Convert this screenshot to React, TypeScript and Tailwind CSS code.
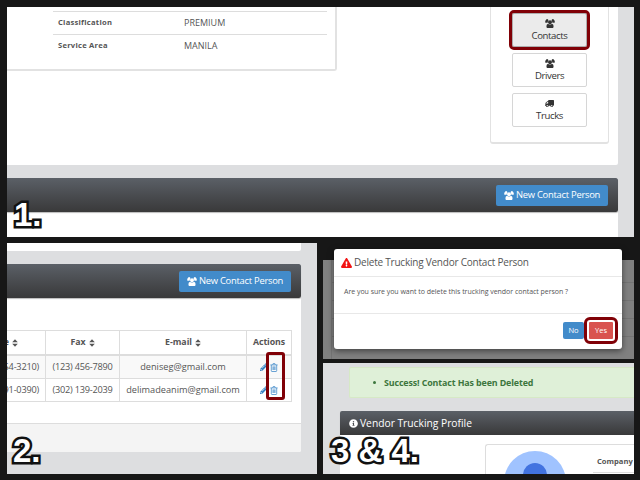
import React from "react";
import { FaTruck, FaInfoCircle, FaExclamationTriangle, FaPencilAlt } from "react-icons/fa";

function UsersIcon({ className }: { className: string }) {
  return (
    <svg viewBox="0 0 1920 1792" fill="currentColor" className={className}>
      <path d="M593 640q-162 5-265 128h-134q-82 0-138-40.500t-56-118.500q0-353 124-353 6 0 43.500 21t97.500 42.500 119 21.500q67 0 133-23-5 37-5 66 0 139 81 256zM1664 1533q0 120-73 189.500t-194 69.500h-874q-121 0-194-69.500t-73-189.500q0-53 3.500-103.500t14-109 26.500-108.500 43-97.500 62-81 85.500-53.500 111.500-20q10 0 43 21.500t73 48 107 48 135 21.500 135-21.500 107-48 73-48 43-21.500q61 0 111.500 20t85.500 53.500 62 81 43 97.500 26.500 108.500 14 109 3.500 103.500zM640 256q0 106-75 181t-181 75-181-75-75-181 75-181 181-75 181 75 75 181zM1344 640q0 159-112.500 271.500t-271.500 112.500-271.500-112.500-112.500-271.500 112.500-271.500 271.500-112.500 271.500 112.500 112.500 271.500zM1920 609q0 78-56 118.500t-138 40.500h-134q-103-123-265-128 81-117 81-256 0-29-5-66 66 23 133 23 59 0 119-21.500t97.500-42.500 43.500-21q124 0 124 353zM1792 256q0 106-75 181t-181 75-181-75-75-181 75-181 181-75 181 75 75 181z" />
    </svg>
  );
}

function SortIcon() {
  return (
    <svg viewBox="0 0 6 8" fill="currentColor" className="h-2 w-[6px]">
      <path d="M3 0.3L5.8 3.3H0.2zM3 7.7L0.2 4.7H5.8z" />
    </svg>
  );
}

function TrashIcon() {
  return (
    <svg viewBox="0 0 8 9" fill="none" stroke="currentColor" strokeWidth="0.8" className="h-[9px] w-2">
      <path d="M0.4 1.9H7.6M2.7 1.8L3.1 0.6H4.9L5.3 1.8M1.3 2V7.7Q1.3 8.5 2 8.5H6Q6.7 8.5 6.7 7.7V2M3 3.4V7M4 3.4V7M5 3.4V7" />
    </svg>
  );
}

function NewContactButton() {
  return (
    <div className="flex h-[21px] w-[112px] items-center justify-center gap-[2px] rounded-[2px] bg-[#428bca] text-[9.4px] leading-none tracking-[-0.25px] text-white">
      <UsersIcon className="h-[9px] w-[10px]" />
      <span>New Contact Person</span>
    </div>
  );
}

function HeaderBar() {
  return (
    <div className="flex h-[34px] shrink-0 items-center justify-end rounded-r-[2px] bg-linear-to-b from-[#5b6067] to-[#39393a] pr-[10px] shadow-[0_1px_1px_#bbb]">
      <NewContactButton />
    </div>
  );
}

function NavButton({ label, icon, active }: { label: string; icon: React.ReactNode; active?: boolean }) {
  return (
    <div
      className={
        "flex h-[34px] w-[75px] flex-col items-center rounded-[2px] border pt-[5px] text-[#333] " +
        (active ? "border-[#adadad] bg-[#ebebeb] outline-3 outline-[#800006]" : "border-[#d6d6d6] bg-white")
      }
    >
      {icon}
      <span className="mt-[2px] text-[9.6px] leading-[11px] tracking-[-0.4px]">{label}</span>
    </div>
  );
}

function DetailRow({ label, value }: { label: string; value: string }) {
  return (
    <div className="flex h-[23px] items-center border-t border-[#ddd] pl-[5px] text-[#555]">
      <span className="w-[126px] text-[7.6px] font-bold tracking-[0.25px]">{label}</span>
      <span className="text-[9px]">{value}</span>
    </div>
  );
}

function VendorPanel() {
  return (
    <section className="flex h-[230px] w-[627px] flex-col overflow-hidden bg-[#dddee0] pr-4">
      <div className="flex h-[158px] shrink-0 justify-between rounded-br-[2px] bg-white pr-[9px]">
        <div className="h-[64px] w-[330px] rounded-br-[3px] border-r-2 border-b-2 border-[#e2e2e2] pt-1 pr-[8px] pl-[46px]">
          <DetailRow label="Classification" value="PREMIUM" />
          <DetailRow label="Service Area" value="MANILA" />
        </div>
        <div className="flex h-[137px] w-[119px] flex-col items-center gap-[6px] rounded-b-[3px] border border-t-0 border-b-2 border-[#e2e2e2] pt-[6px]">
          <NavButton active label="Contacts" icon={<UsersIcon className="h-[9px] w-[10px]" />} />
          <NavButton label="Drivers" icon={<UsersIcon className="h-[9px] w-[10px]" />} />
          <NavButton label="Trucks" icon={<FaTruck className="h-[9px] w-[9px] -scale-x-100" />} />
        </div>
      </div>
      <div className="mt-[13px] flex flex-1 flex-col bg-white">
        <HeaderBar />
      </div>
    </section>
  );
}

const contacts = [
  { phone: "(987) 654-3210)", fax: "(123) 456-7890", email: "deniseg@gmail.com" },
  { phone: "(639) 191-0390)", fax: "(302) 139-2039", email: "delimadeanim@gmail.com" },
];

function ContactsPanel() {
  return (
    <section className="flex h-[231px] w-[310px] flex-col overflow-hidden bg-[#dddee0] pr-4">
      <div className="h-2 shrink-0 rounded-br-[2px] bg-white" />
      <div className="mt-[13px] flex h-[188px] shrink-0 flex-col rounded-br-[2px] bg-white">
        <HeaderBar />
        <div className="mt-8 mr-[9px] grid grid-cols-[39px_74px_127px_45px] grid-rows-[23px_24px_23px] border-y border-[#ddd] text-[9.2px] text-[#555] *:flex *:items-center *:border-r *:border-[#ddd]">
          <div className="justify-end gap-[3px] overflow-hidden pr-[27px] text-[8.8px] font-bold"><span>Phone</span><span className="shrink-0"><SortIcon /></span></div>
          <div className="justify-center gap-[3px] text-[8.8px] font-bold">Fax <SortIcon /></div>
          <div className="justify-center gap-[3px] text-[8.8px] font-bold">E-mail <SortIcon /></div>
          <div className="justify-center text-[8.8px] font-bold tracking-[-0.1px]">Actions</div>
          {contacts.map((c, i) => {
            const shade = i === 0 ? "border-t-2 bg-[#f9f9f9] " : "border-t ";
            return (
              <React.Fragment key={c.email}>
                <div className={shade + "justify-end overflow-hidden pr-[6px] tracking-[-0.22px] whitespace-nowrap"}>{c.phone}</div>
                <div className={shade + "justify-center tracking-[-0.22px] whitespace-nowrap"}>{c.fax}</div>
                <div className={shade + "justify-center"}>{c.email}</div>
                <div className={shade + "gap-[2px] pl-[13px] text-[#428bca]"}>
                  <FaPencilAlt className="h-[8px] w-[8px] text-[#2f7cc0]" />
                  <TrashIcon />
                </div>
              </React.Fragment>
            );
          })}
        </div>
        <div className="mt-auto h-[29px] rounded-br-[2px] border-t border-[#ddd] bg-[#f4f4f4]" />
      </div>
      <div className="absolute top-[352px] left-[266px] h-[48px] w-[19px] rounded-[3px] border-3 border-[#800006]" />
    </section>
  );
}

function DeleteDialog() {
  return (
    <div className="absolute top-[249px] left-[334px] h-[100px] w-[288px] rounded-[3px] bg-white text-[#555] shadow-[0_2px_6px_rgba(0,0,0,0.5)]">
      <div className="flex h-[28px] items-center gap-[2px] border-b border-[#e8e8e8] pl-[7px]">
        <FaExclamationTriangle className="h-[10px] w-[11px] text-[#f11414]" />
        <span className="text-[10px] tracking-[-0.22px]">Delete Trucking Vendor Contact Person</span>
      </div>
      <div className="h-[37px] border-b border-[#e8e8e8] pt-[9px] pl-[10px] text-[7px] leading-[12px] tracking-[-0.03px]">
        Are you sure you want to delete this trucking vendor contact person ?
      </div>
      <div className="flex justify-end gap-[5px] pt-[8px] pr-[9px] text-[7.5px] text-white">
        <span className="flex h-[17px] w-[21px] items-center justify-center rounded-[2px] bg-[#428bca]">No</span>
        <span className="flex h-[17px] w-[24px] items-center justify-center rounded-[1px] bg-[#d9534f] outline-3 outline-offset-2 outline-[#800006]">Yes</span>
      </div>
    </div>
  );
}

function ProfilePanel() {
  return (
    <section className="h-[111px] w-[311px] overflow-hidden bg-[#dddee0] pt-[4px] pl-[17px]">
      <div className="ml-[9px] flex h-[31px] items-center gap-[8px] rounded-l-[2px] border border-r-0 border-[#d6e9c6] bg-[#dff0d8] pl-[23px] text-[8.9px] font-bold tracking-[-0.12px] text-[#3c763d]">
        <span className="size-[3px] rounded-full bg-[#3c763d]" />
        <span>Success! Contact Has been Deleted</span>
      </div>
      <div className="mt-[13px] flex h-[24px] items-center gap-[2px] rounded-tl-[2px] bg-linear-to-b from-[#5b6067] to-[#39393a] pt-px pl-[9px] text-[10.3px] tracking-[-0.02px] text-white shadow-[0_1px_1px_#bbb]">
        <FaInfoCircle className="size-[9px]" />
        <span>Vendor Trucking Profile</span>
      </div>
      <div className="h-[39px] bg-white pt-[9px] pl-[145px]">
        <div className="flex h-[40px] rounded-tl-[3px] border-t border-l border-[#ddd] pt-[6px] pl-[18px]">
          <svg viewBox="0 0 62 62" className="h-[62px] w-[62px] shrink-0">
            <circle cx="31" cy="31" r="31" fill="#a0c3ff" />
            <circle cx="31" cy="24" r="12" fill="#4273e0" />
          </svg>
          <div className="ml-[27px] flex h-[22px] w-[60px] items-center border-b border-[#ddd] pl-[4px] text-[7.6px] font-bold text-[#555]">Company</div>
        </div>
      </div>
    </section>
  );
}

function StepLabel({ className, children }: { className: string; children: React.ReactNode }) {
  return (
    <div className={"absolute font-['Liberation_Sans',sans-serif] text-[33px] leading-none font-bold whitespace-nowrap text-white [paint-order:stroke] [-webkit-text-stroke:5px_#111] [stroke-linejoin:round] " + className}>
      {children}
    </div>
  );
}

export default function App() {
  return (
    <main className="relative h-[480px] w-[640px] overflow-hidden bg-[#171717] pt-[7px] pl-[7px] font-['Open_Sans',sans-serif]">
      <VendorPanel />
      <div className="mt-[6px] flex gap-[6px]">
        <ContactsPanel />
        <div className="flex flex-col gap-1 pt-[17px]">
          <section className="h-[99px] w-[311px] bg-[#808080] pl-[8px]">
            <div className="flex h-full flex-col border-l border-[#747474] pt-[22px]">
              <div className="h-[18px] border-t border-[#747474]" />
              <div className="h-[18px] border-t border-[#747474]" />
              <div className="h-[18px] border-t border-[#747474]" />
              <div className="h-[18px] border-t border-[#747474]" />
            </div>
          </section>
          <ProfilePanel />
        </div>
      </div>
      <DeleteDialog />
      <StepLabel className="top-[198px] left-[14px]">1.</StepLabel>
      <StepLabel className="top-[434px] left-[13px]">2.</StepLabel>
      <StepLabel className="top-[434px] left-[331px]">3 &amp; 4.</StepLabel>
    </main>
  );
}
